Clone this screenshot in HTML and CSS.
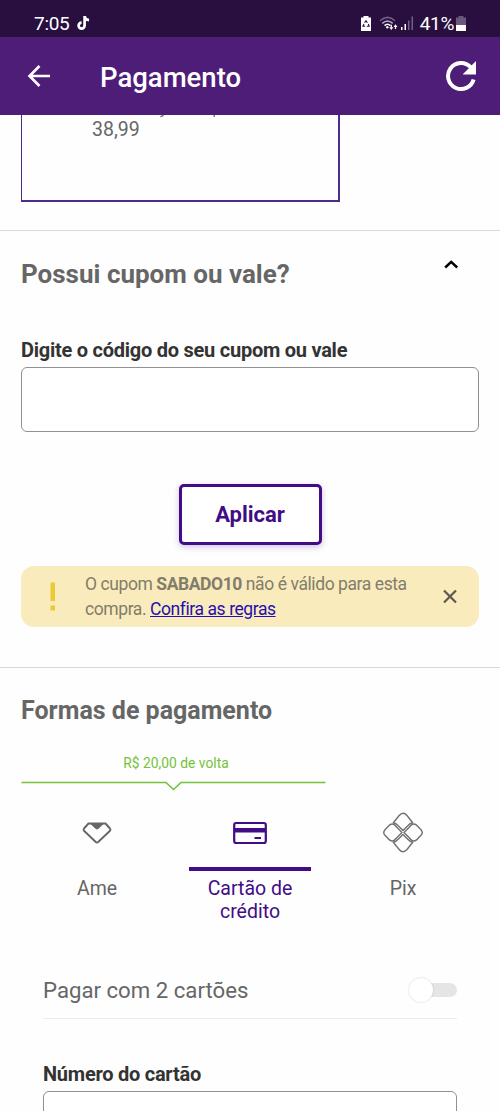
FILE: index.html
```html
<!DOCTYPE html>
<html lang="pt-BR">
<head>
<meta charset="utf-8">
<title>Pagamento</title>
<link rel="stylesheet" href="styles.css">
</head>
<body>
<div class="status">
  <span class="clock">7:05</span>
  <svg class="note" width="14" height="16" viewBox="0 0 14 16"><path d="M7.600 1v9.600a3 3 0 1 1-3-3M7.600 1.200c.3 2.400 1.800 3.800 4.400 4" fill="none" stroke="#fff" stroke-width="2.700"/></svg>
  <span class="spacer"></span>
  <svg class="saver" width="10" height="15" viewBox="0 0 10 15"><path fill="#fff" d="M2.500 0h5v1.500H10V15H0V1.500h2.500z"/><path d="M3.600 6.800 5 4.800l1.400 2M7.300 8l.9 2.300H5.800M4.200 10.300H1.900L3 8" fill="none" stroke="#290f3f" stroke-width="1.100"/></svg>
  <svg class="wifi" width="20" height="15" viewBox="0 0 20 15"><g fill="none" stroke-width="1.500"><path d="M1 4.800Q8.500-2 16 4.800" stroke="#755e88"/><path d="M3.300 7.400Q8.500 2.600 13.700 7.400" stroke="#b9adc4"/><path d="M5.500 9.600q3-2.600 6 0" stroke="#fff"/></g><circle cx="8.300" cy="11.300" r="1.200" fill="#fff"/><path d="M10.300 11.200h4l-2 2.800zM14.500 11l2-2.800 2 2.800z" fill="#fff"/><path d="M12.300 8.700v3M16.500 10v3" stroke="#fff" stroke-width="1.200"/></svg>
  <svg class="signal" width="13" height="14" viewBox="0 0 13 14"><path d="M0 11h1.500v3H0zM3.500 8H5v6H3.500z" fill="#fff"/><path d="M7 4.500h1.500V14H7zM10.500.5H12V14h-1.500z" fill="#755e88"/></svg>
  <span class="percent">41%</span>
  <svg class="battery" width="10" height="15" viewBox="0 0 10 15"><path fill="#6b577c" d="M2.500 0h5v1.500H10V9H0V1.500h2.500z"/><path fill="#fff" d="M0 9h10v6H0z"/></svg>
</div>
<header class="bar">
  <svg class="back" width="24" height="24" viewBox="0 0 24 24"><path d="M23 12H3M12.500 2 2.500 12l10 10" fill="none" stroke="#fff" stroke-width="2.600"/></svg>
  <h1>Pagamento</h1>
  <svg class="reload" width="32" height="32" viewBox="0 0 32 32"><path d="M25.600 7.200A13 13 0 1 0 28.600 19.500" fill="none" stroke="#fff" stroke-width="4"/><path d="M31 1v13.400H17.600z" fill="#fff"/></svg>
</header>
<section class="item">
  <div class="card">
    <svg class="tails" width="60" height="3" viewBox="0 0 60 3"><path d="M4.200 0Q4 1.600 1.300 1.500M55.200 0v2" fill="none" stroke="#777" stroke-width="1.500"/></svg>
    <p>38,99</p>
  </div>
</section>
<section class="coupon">
  <div class="head">
    <h2 class="q">Possui cupom ou vale?</h2>
    <svg class="chev" width="16" height="10" viewBox="0 0 16 10"><path d="m2.200 8.500 6-5.600 6 5.600" fill="none" stroke="#000" stroke-width="2.500"/></svg>
  </div>
  <label class="label" for="coupon">Digite o código do seu cupom ou vale</label>
  <input class="field" id="coupon">
  <button class="apply">Aplicar</button>
  <div class="alert">
    <svg class="bang" width="6" height="30" viewBox="0 0 6 30"><path d="M.5.500h4.500v18.500H.5zM.5 23.500H5V28.500H.5z" fill="#ebc934"/></svg>
    <p>O cupom <b>SABADO10</b> não é válido para esta<br>compra. <a href="#">Confira as regras</a></p>
    <svg class="close" width="14" height="14" viewBox="0 0 14 14"><path d="m1 .5 12 12M13 .5 1 12.500" stroke="#5d5b50" stroke-width="2.200"/></svg>
  </div>
</section>
<section class="methods">
  <h2 class="f">Formas de pagamento</h2>
  <div class="cashback">R$ 20,00 de volta</div>
  <svg class="notch" width="306" height="11" viewBox="0 0 306 11"><path d="M.5 2.500H145l7.500 7 7.500-7H304.500" fill="none" stroke="#75c13b" stroke-width="1.600"/></svg>
  <div class="tabs">
    <div class="tab">
      <svg width="42" height="42" viewBox="0 0 42 42"><path d="M12.500 12.500h17l4.500 5q1 1.200 0 2.300L22.200 31q-1.200 1-2.400 0L8 19.800q-1-1.100 0-2.300z" fill="none" stroke="#666" stroke-width="1.900" stroke-linejoin="round"/><path d="M13.500 12h15l-6 5.700q-1.500 1.200-3 0z" fill="#666"/></svg>
      <span>Ame</span>
    </div>
    <div class="tab on">
      <svg width="42" height="42" viewBox="0 0 42 42"><rect x="5.200" y="12" width="31.600" height="20" rx="2" fill="none" stroke="#410c86" stroke-width="2.200"/><path d="M5 17h32v4.500H5z" fill="#410c86"/><path d="M25.500 27H32" stroke="#410c86" stroke-width="2"/></svg>
      <span>Cartão de<br>crédito</span>
    </div>
    <div class="tab">
      <svg width="42" height="42" viewBox="0 0 42 42"><g transform="translate(0 .5)" fill="none" stroke="#707070" stroke-width="1.400" stroke-linejoin="round"><path d="M11.300 11.200 17.200 4Q21-.5 25 4L30.700 11.200Q28 11.700 25.800 14.200L21 19 16.200 14.200Q14 11.700 11.300 11.200z"/><path d="M11.300 30.800Q14 30.300 16.200 27.800L21 23l4.800 4.800Q28 30.300 30.700 30.800L25 38Q21 42.500 17.200 38z"/><path d="M20 21 14.500 15.500Q10.500 10 6.500 14.500L3 18.200Q.5 21 3 23.800L6.500 27.500Q10.500 32 14.500 26.500zM22 21l5.500-5.500Q31.500 10 35.500 14.500L39 18.200Q41.500 21 39 23.800L35.500 27.500Q31.500 32 27.500 26.500z"/></g></svg>
      <span>Pix</span>
    </div>
  </div>
  <div class="split">
    <span>Pagar com 2 cartões</span>
    <div class="toggle"><i></i></div>
  </div>
  <label class="label num" for="card">Número do cartão</label>
  <input class="field cardno" id="card">
</section>
</body>
</html>
```
FILE: styles.css
```css
* { box-sizing: border-box; }
body { margin: 0; height: 1111px; overflow: hidden; background: #fefefe; color: #666; font-family: Roboto, sans-serif; }
h1, h2, p { margin: 0; }
svg { display: block; flex: none; }
.status { display: flex; height: 37px; padding: 9px 34px 0; align-items: center; background: #290f3f; color: #fff; font-size: 19px; }
.clock, .percent { letter-spacing: -0.300px; }
.note { margin: 0 0 1px 8px; }
.spacer { flex: 1; }
.wifi { margin-left: 8px; }
.signal { margin-left: 2px; }
.percent { margin-left: 6px; }
.battery { margin-left: 2px; }
.status .saver { margin-left: 2px; }
.bar { display: flex; height: 78px; padding: 0 23px 0 27px; align-items: center; background: #4e1d78; color: #fff; }
h1 { flex: 1; margin-left: 49px; padding-top: 3px; font-size: 27.500px; font-weight: 500; line-height: 33px; }
.item { height: 116px; padding-left: 21px; border-bottom: 1px solid #d9d9d9; }
.card { width: 319px; height: 87px; border: solid #4f2b8d; border-width: 0 2px 2px 1px; }
.tails { margin: 0 0 -3px 137px; }
.card p { padding: 3px 0 0 70px; font-size: 19.500px; line-height: 23px; }
.coupon { height: 437px; padding: 0 21px; border-bottom: 1px solid #d9d9d9; }
.head { display: flex; height: 104px; padding: 28px 20px 0 0; justify-content: space-between; align-items: flex-start; }
h2 { font-size: 25px; line-height: 32px; font-weight: 700; }
.q { margin-top: -1px; font-size: 26px; }
.label { display: block; height: 32px; color: #333; font-size: 20px; letter-spacing: -0.250px; line-height: 31px; font-weight: 700; }
.field { display: block; width: 100%; height: 65px; border: 1px solid #919191; border-radius: 6px; background: #fff; }
.apply { display: block; width: 143px; height: 61px; margin: 52px auto 21px 157.500px; border: 3px solid #410c86; border-radius: 5px; background: #fff; box-shadow: 0 2px 6px #410c8640; color: #410c86; font: 700 22px Roboto, sans-serif; }
.alert { display: flex; height: 61px; padding: 0 22px 0 29px; align-items: center; border-radius: 13px; background: #faebbd; color: #827d6b; font-size: 17.500px; letter-spacing: -0.420px; line-height: 25px; }
.alert p { flex: 1; margin-left: 29px; white-space: nowrap; }
.alert b { font-weight: 700; }
.alert a { color: #2410b0; }
.methods { padding: 27px 21px 0; }
.cashback { width: 310px; height: 33px; margin-top: 20px; color: #75c13b; font-size: 13.850px; line-height: 32px; text-align: center; }
.tabs { display: grid; grid-template-columns: repeat(3, 153px); justify-content: center; margin-top: 20px; height: 116px; }
.tab { display: flex; flex-direction: column; align-items: center; font-size: 19.500px; line-height: 23px; text-align: center; }
.tab span { width: 122px; border-top: 4px solid transparent; margin-top: 14px; padding-top: 6px; }
.on { color: #410c86; }
.tab.on span { border-color: #410c86; }
.split { display: flex; height: 55px; margin: 37px 22px 0; padding-bottom: 2px; align-items: center; justify-content: space-between; border-bottom: 1px solid #ebebeb; font-size: 22.200px; }
.toggle { display: flex; position: relative; width: 48px; height: 24px; align-items: center; }
.toggle::before { content: ""; position: absolute; inset: 5px 0 5px 12px; border-radius: 7px; background: #e5e5e5; }
.toggle i { position: relative; width: 24px; height: 24px; border-radius: 50%; background: #fff; box-shadow: 0 0 2px #0003; }
.num { margin: 40px 22px 0; }
.cardno { width: auto; min-width: 414px; margin: 0 22px; }
```
